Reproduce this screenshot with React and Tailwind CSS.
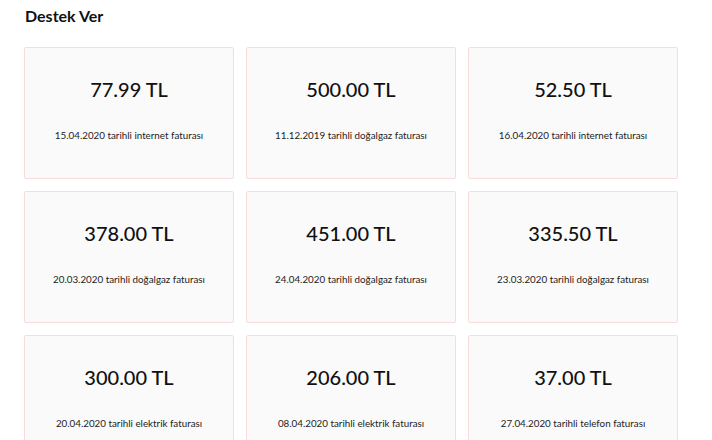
const bills = [
  { amount: '77.99 TL', text: '15.04.2020 tarihli internet faturası' },
  { amount: '500.00 TL', text: '11.12.2019 tarihli doğalgaz faturası' },
  { amount: '52.50 TL', text: '16.04.2020 tarihli internet faturası' },
  { amount: '378.00 TL', text: '20.03.2020 tarihli doğalgaz faturası' },
  { amount: '451.00 TL', text: '24.04.2020 tarihli doğalgaz faturası' },
  { amount: '335.50 TL', text: '23.03.2020 tarihli doğalgaz faturası' },
  { amount: '300.00 TL', text: '20.04.2020 tarihli elektrik faturası' },
  { amount: '206.00 TL', text: '08.04.2020 tarihli elektrik faturası' },
  { amount: '37.00 TL', text: '27.04.2020 tarihli telefon faturası' },
]

function BillCard({ amount, text }) {
  return (
    <div className="h-[132px] border border-[#f7dcdc] rounded-[2px] bg-[#fafafa] flex flex-col items-center pt-[27px]">
      <div className="text-[20px] leading-[28px] font-medium text-[#111]">{amount}</div>
      <div className="mt-[25px] text-[9.8px] leading-[14px] text-[#222]">{text}</div>
    </div>
  )
}

export default function App() {
  return (
    <div className="min-h-screen bg-white font-['Lato','Noto_Sans',sans-serif]">
      <div className="w-[654px] ml-[24px] pt-[6px]">
        <h1 className="text-[16px] leading-[20px] font-bold text-[#111] pl-[1px]">Destek Ver</h1>
        <div className="mt-[21px] grid grid-cols-3 gap-x-[12px] gap-y-[12px]">
          {bills.map((b, i) => (
            <BillCard key={i} amount={b.amount} text={b.text} />
          ))}
        </div>
      </div>
    </div>
  )
}
